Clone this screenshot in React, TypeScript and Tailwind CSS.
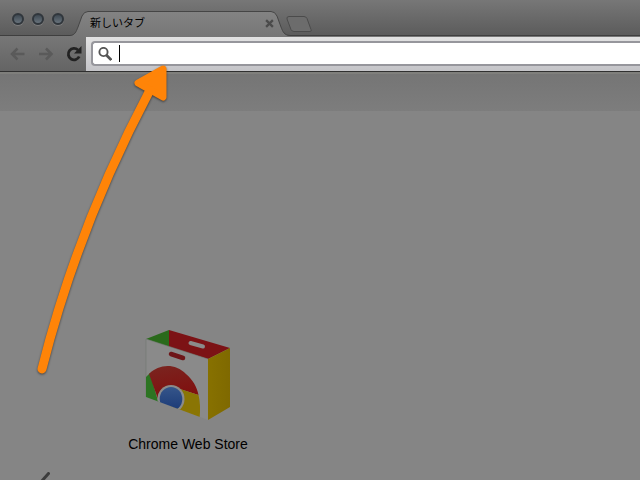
import React from 'react';

const TrafficLights: React.FC = () => (
  <div className="flex gap-2 pt-[13px] pl-3">
    {['Close window', 'Minimize window', 'Zoom window'].map((label) => (
      <button
        key={label}
        aria-label={label}
        className="size-3 rounded-full border-2 border-[#30363c] bg-linear-to-b from-[#3f4952] to-[#68737c] shadow-[0_1px_0_#7c7c7c]"
      />
    ))}
  </div>
);

const Tab: React.FC = () => (
  <div className="relative ml-[6px] h-[25px] w-[220px]">
    <svg className="absolute inset-0 size-full" viewBox="0 0 220 25" fill="none">
      <defs>
        <linearGradient id="tab" x1="0" y1="0" x2="0" y2="1">
          <stop offset="0" stopColor="#838383" />
          <stop offset="1" stopColor="#777" />
        </linearGradient>
      </defs>
      <path
        d="M0 25C5 24 6 21 8 16L12 5Q14 .5 18 .5H201Q205 .5 207 5l4 11c2 5 3 8 9 9Z"
        fill="url(#tab)"
      />
      <path
        d="M0 24.5C5 24 6 21 8 16L12 5Q14 .5 18 .5H201Q205 .5 207 5l4 11c2 5 3 8 9 8.5"
        stroke="#454545"
      />
    </svg>
    <div className="relative flex h-full items-center justify-between pr-4 pl-5">
      <span className="text-[11px] text-black">新しいタブ</span>
      <button aria-label="Close tab" className="text-[#4b4b4b]">
        <svg width="9" height="9" viewBox="0 0 8 8" stroke="currentColor" strokeWidth="2">
          <path d="M1 1l6 6M7 1L1 7" />
        </svg>
      </button>
    </div>
  </div>
);

const TabStrip: React.FC = () => (
  <div className="flex h-9 items-stretch bg-linear-to-b from-[#777] to-[#5b5b5b] shadow-[inset_0_-1px_0_#3f3f3f]">
    <TrafficLights />
    <div className="flex items-end">
      <Tab />
      <button aria-label="New tab" className="mb-[3px] -ml-1">
        <svg width="28" height="17" viewBox="0 0 28 17">
          <path
            d="M3 .5h15q2 0 3 2l4 11q1 2-1 2H8q-2 0-3-2L1 3Q.5.5 3 .5Z"
            fill="#6c6c6c"
            stroke="#4b4b4b"
          />
        </svg>
      </button>
    </div>
  </div>
);

const Toolbar: React.FC = () => (
  <div className="flex h-9 border-b border-[#303030] bg-linear-to-b from-[#777] to-[#646464]">
    <div className="flex w-[86px] shrink-0 items-center gap-3 pl-[10px]">
      <button aria-label="Back" className="text-[#5a5a5a]">
        <svg width="16" height="14" viewBox="0 0 16 14" fill="none" stroke="currentColor" strokeWidth="2.5">
          <path d="M7.5 1.5L2 7l5.500 5.500M2 7H14.500" />
        </svg>
      </button>
      <button aria-label="Forward" className="text-[#5a5a5a]">
        <svg width="16" height="14" viewBox="0 0 16 14" fill="none" stroke="currentColor" strokeWidth="2.5">
          <path d="M8 1.5L13.500 7 8 12.500M13.500 7H1" />
        </svg>
      </button>
      <button aria-label="Reload" className="text-[#222]">
        <svg width="16" height="16" viewBox="0 0 16 16" fill="none">
          <path d="M12 4A5.700 5.700 0 1 0 13.200 10.500" stroke="currentColor" strokeWidth="2.800" />
          <path d="M15.500 0v7.500H8Z" fill="currentColor" />
        </svg>
      </button>
    </div>
    <div className="mt-px min-w-0 flex-1 bg-linear-to-b from-[#e2e2e2] to-[#c4c4c8] pt-1 pl-[5px]">
      <label className="flex h-[25px] items-center rounded-l border-2 border-r-0 border-[#96969c] bg-white pl-[5px]">
        <svg className="shrink-0" width="14" height="14" viewBox="0 0 14 14" fill="none" stroke="#555">
          <circle cx="5.5" cy="5" r="4.1" strokeWidth="1.9" />
          <path d="M8.300 8l5 5" strokeWidth="2.8" />
        </svg>
        <span className="ml-[7px] h-[17px] w-px bg-black" />
        <input
          aria-label="Address and search bar"
          className="h-5 min-w-0 flex-1 bg-transparent text-base text-black outline-none"
        />
      </label>
    </div>
  </div>
);

const StoreIcon: React.FC = () => (
  <svg width="88" height="92" viewBox="0 0 88 92">
    <defs>
      <clipPath id="front">
        <path d="M2 10L64 30V91L2 68Z" />
      </clipPath>
      <linearGradient id="red" x1="0" y1="0" x2="0.3" y2="1">
        <stop offset="0" stopColor="#7a2520" />
        <stop offset="1" stopColor="#80100f" />
      </linearGradient>
      <linearGradient id="yellow" x1="0" y1="0" x2="1" y2="0">
        <stop offset="0" stopColor="#877100" />
        <stop offset="1" stopColor="#7f6900" />
      </linearGradient>
      <linearGradient id="blue" x1="0" y1="0" x2="0" y2="1">
        <stop offset="0" stopColor="#35558a" />
        <stop offset="1" stopColor="#1b3a76" />
      </linearGradient>
    </defs>
    <path d="M2 10L25 1V18Z" fill="#2a6a1b" />
    <path d="M25 1L86 19 64 30 25 18Z" fill="#7c1215" />
    <path d="M46.5 14L59 17.5" stroke="#8b8b8b" strokeWidth="4" strokeLinecap="round" />
    <path d="M64 30L86 19V78L64 91Z" fill="url(#yellow)" />
    <path d="M2 10L64 30V91L2 68Z" fill="#8a8a8a" />
    <path d="M2 68V10L64 30" fill="none" stroke="#6f776e" strokeWidth="0.6" />
    <path d="M27 25L39 29" stroke="#6e1518" strokeWidth="4.5" strokeLinecap="round" />
    <g clipPath="url(#front)">
      <path d="M2 48L6 44 14 72 26 80V92H2Z" fill="#2c7422" />
      <path d="M5 45C15 35 31 34 42 45 49 51 53 58 54.500 66L36 60 14 70Z" fill="url(#red)" />
      <path d="M36 60L54.500 66Q57 76 55.500 90L38 84 24 80Z" fill="#8a7504" />
      <ellipse cx="27" cy="70" rx="13.5" ry="14" fill="#8b8b8b" />
      <ellipse cx="27" cy="70" rx="11.3" ry="12" fill="url(#blue)" />
    </g>
  </svg>
);

const Arrow: React.FC = () => (
  <svg
    className="pointer-events-none absolute top-[56px] left-[30px] drop-shadow-[0_1px_1px_rgba(0,0,0,0.5)]"
    width="150"
    height="326"
    viewBox="30 56 150 326"
    fill="none"
    stroke="#ff8408"
    strokeLinecap="round"
    strokeLinejoin="round"
  >
    <path d="M42 369Q78 226 150 90" strokeWidth="9" />
    <path d="M163 69L138 83 163 97Z" fill="#ff8408" strokeWidth="7" />
  </svg>
);

const App: React.FC = () => (
  <div className="relative min-h-screen overflow-hidden bg-[#858585] font-['Liberation_Sans','Noto_Sans_CJK_JP',sans-serif]">
    <TabStrip />
    <Toolbar />
    <div className="h-[39px] border-t-2 border-[#7f7f7c] bg-linear-to-b from-[#757575] to-[#7d7d7d]" />
    <main className="px-[127px] pt-[218px]">
      <a href="#store" className="flex w-[122px] flex-col items-center">
        <StoreIcon />
        <span className="mt-[13px] text-sm whitespace-nowrap text-black">Chrome Web Store</span>
      </a>
    </main>
    <footer className="pt-[18px] pl-10">
      <svg className="block" width="10" height="8" viewBox="0 0 10 8">
        <path d="M8.5 1.5L1 10" stroke="#3c3c3c" strokeWidth="3" strokeLinecap="round" />
      </svg>
    </footer>
    <Arrow />
  </div>
);

export default App;
